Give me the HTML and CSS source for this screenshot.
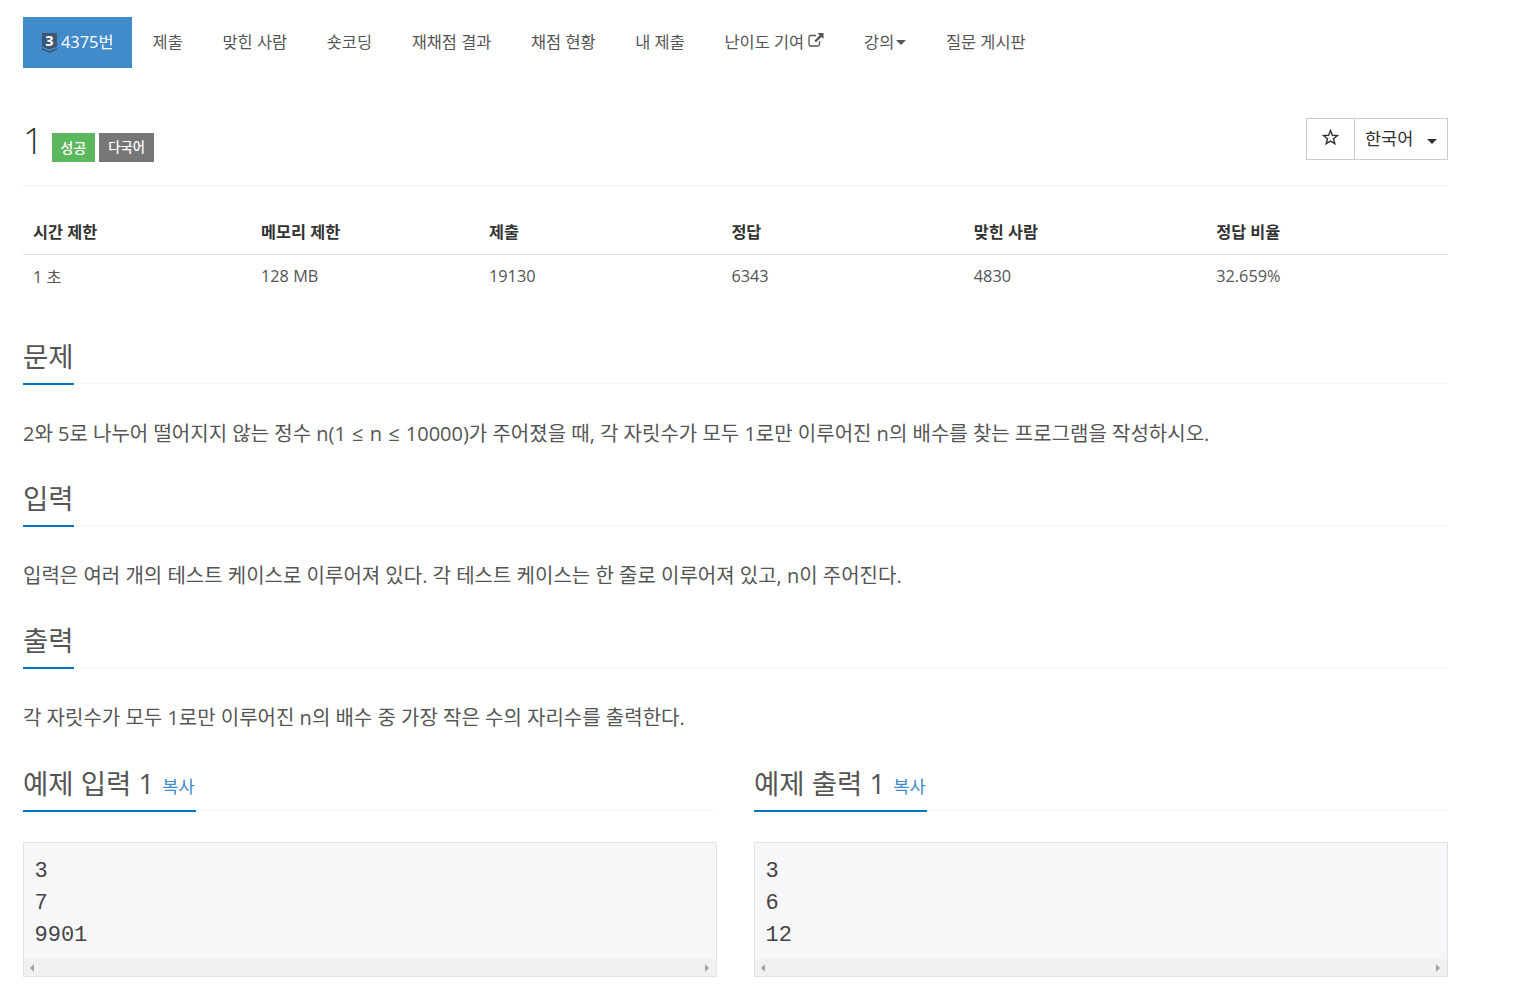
FILE: index.html
```html
<!DOCTYPE html>
<html lang="ko">
<head>
<meta charset="utf-8">
<title>1</title>
<link rel="stylesheet" href="styles.css">
</head>
<body>
<div class="container">
  <nav class="tabs">
    <a class="tab active"><svg class="tier" viewBox="0 0 15 20" width="15" height="20"><path d="M0 0H15V13.5L7.5 16.6 0 13.5Z" fill="#3f5670"/><path d="M0 15.2L7.5 18.2 15 15.2V16.8L7.5 20 0 16.8Z" fill="#3f5670"/><text x="7.5" y="13" text-anchor="middle" class="tier-num">3</text></svg><span>4375번</span></a>
    <a class="tab">제출</a>
    <a class="tab">맞힌 사람</a>
    <a class="tab">숏코딩</a>
    <a class="tab">재채점 결과</a>
    <a class="tab">채점 현황</a>
    <a class="tab">내 제출</a>
    <a class="tab">난이도 기여 <svg class="ext" viewBox="0 0 16 14" width="16" height="14"><path d="M11.5 8.2V11.3A1.7 1.7 0 0 1 9.8 13H2.7A1.7 1.7 0 0 1 1 11.3V4.2A1.7 1.7 0 0 1 2.7 2.5H8" fill="none" stroke="#555" stroke-width="1.3"/><path d="M9.5 0H15.5V6L13.4 3.9 8 9.3 6.4 7.7 11.7 2.3Z" fill="#555"/></svg></a>
    <a class="tab">강의<i class="caret"></i></a>
    <a class="tab">질문 게시판</a>
  </nav>

  <header class="title-row">
    <div class="title-left">
      <h1 class="title">1</h1>
      <span class="label green">성공</span>
      <span class="label gray">다국어</span>
    </div>
    <div class="btn-group">
      <button class="btn star"><svg viewBox="0 0 18 17" width="17" height="16"><path d="M9 1.6L11 6.6 16.4 7 12.2 10.4 13.6 15.6 9 12.8 4.4 15.6 5.8 10.4 1.6 7 7 6.6Z" fill="none" stroke="#333" stroke-width="1.5"/></svg></button>
      <button class="btn lang">한국어<i class="caret dark"></i></button>
    </div>
  </header>

  <table class="info">
    <thead>
      <tr><th class="c1">시간 제한</th><th class="c1">메모리 제한</th><th class="c2">제출</th><th class="c2">정답</th><th class="c2">맞힌 사람</th><th>정답 비율</th></tr>
    </thead>
    <tbody>
      <tr><td>1 초</td><td>128 MB</td><td>19130</td><td>6343</td><td>4830</td><td>32.659%</td></tr>
    </tbody>
  </table>

  <section class="sec first">
    <div class="head"><h2>문제</h2></div>
    <p>2와 5로 나누어 떨어지지 않는 정수 n(1 <span class="le">≤</span> n <span class="le">≤</span> 10000)가 주어졌을 때, 각 자릿수가 모두 1로만 이루어진 n의 배수를 찾는 프로그램을 작성하시오.</p>
  </section>
  <section class="sec">
    <div class="head"><h2>입력</h2></div>
    <p>입력은 여러 개의 테스트 케이스로 이루어져 있다. 각 테스트 케이스는 한 줄로 이루어져 있고, n이 주어진다.</p>
  </section>
  <section class="sec">
    <div class="head"><h2>출력</h2></div>
    <p>각 자릿수가 모두 1로만 이루어진 n의 배수 중 가장 작은 수의 자리수를 출력한다.</p>
  </section>

  <div class="samples">
    <section class="sample">
      <div class="head"><h2>예제 입력 1 <a class="copy">복사</a></h2></div>
      <div class="box">
        <pre>3
7
9901</pre>
        <div class="hbar"><i class="arr left"></i><i class="arr right"></i></div>
      </div>
    </section>
    <section class="sample">
      <div class="head"><h2>예제 출력 1 <a class="copy">복사</a></h2></div>
      <div class="box">
        <pre>3
6
12</pre>
        <div class="hbar"><i class="arr left"></i><i class="arr right"></i></div>
      </div>
    </section>
  </div>
</div>
</body>
</html>
```

FILE: styles.css
```css
* { box-sizing: border-box; }
html, body { margin: 0; padding: 0; background: #fff; }
body {
  font-family: "Open Sans", "Noto Sans CJK KR", sans-serif;
  font-size: 14px;
  color: #333;
  height: 1005px;
  overflow: hidden;
}
.container { width: 1425px; margin-left: 23px; }

.tabs { display: flex; margin-top: 17px; height: 51px; }
.tab {
  display: flex; align-items: center; height: 48px; padding: 0 19.85px;
  font-size: 16.4px; color: #555; white-space: pre;
}
.tab.active { background: #428bca; color: #fff; padding: 0 18px 0 19px; height: 51px; margin-right: 1.2px; }
.tab.active span { margin-top: -3px; }
.tier { margin-right: 4px; margin-top: 1px; overflow: visible; }
.tier-num { font: bold 14.5px "Open Sans", sans-serif; fill: #fff; }
.ext { margin-top: -2px; }
.caret {
  display: inline-block; width: 0; height: 0; margin-left: 2px;
  border-top: 5px solid #555; border-left: 5px solid transparent; border-right: 5px solid transparent;
  margin-top: 2px;
}
.caret.dark { border-top-color: #333; margin-left: 14px; margin-top: 7px; }

.title-row {
  display: flex; justify-content: space-between; align-items: flex-start;
  margin-top: 50px; height: 68px; border-bottom: 1px solid #eee;
}
.title-left { display: flex; align-items: flex-start; }
.title { margin: 0; font-size: 36px; font-weight: 300; line-height: 46px; color: #333; height: 46px; }
.label {
  display: block; height: 29px; margin-top: 15px; padding: 0 9px; line-height: 29px;
  font-size: 14px; font-weight: 500; color: #fff;
}
.label.green { background: #5cb85c; margin-left: 8px; }
.label.gray { background: #777; margin-left: 4px; font-size: 13.3px; }

.btn-group { display: flex; height: 42px; border: 1px solid #ccc; }
.btn {
  background: #fff; border: 0; padding: 0; margin: 0; font-family: inherit;
  font-size: 17.5px; color: #333; display: flex; align-items: center;
}
.btn.star { width: 48px; justify-content: center; border-right: 1px solid #ccc; }
.btn.star svg { margin-top: -5px; }
.btn.lang { width: 92px; padding: 0 0 3px 10px; }

.info { width: 100%; border-collapse: collapse; margin-top: 22px; table-layout: fixed; }
.info th, .info td { padding: 0 10px; text-align: left; }
.info th { height: 46px; font-weight: 700; border-bottom: 1px solid #ddd; color: #333; font-size: 16.3px; }
.info td { height: 44px; color: #555; font-size: 16.3px; }
.c1 { width: 228px; }
.c2 { width: 242.4px; }

.sec { height: 142px; }
.sec.first { margin-top: 43px; }
.head { border-bottom: 1px dotted #eee; height: 43px; }
.head h2 {
  display: inline-block; margin: 0; height: 44px; font-size: 27.5px; line-height: 32px;
  font-weight: 400; color: #555; border-bottom: 2px solid #0076c0; white-space: pre;
}
.sec p { margin: 35px 0 0; font-size: 20px; line-height: 30px; color: #555; white-space: nowrap; }
.le { margin: 0 1px; }

.samples { display: grid; grid-template-columns: 694px 694px; column-gap: 37px; margin-top: 0; }
.sample .head { height: 44px; }
.sample .head h2 { height: 45px; line-height: 34px; padding-right: 1px; }
.copy { font-size: 17.6px; color: #428bca; margin-left: 1px; vertical-align: 1px; }
.box { margin-top: 31px; height: 135px; border: 1px solid #e1e1e8; background: #f7f7f9; display: flex; flex-direction: column; }
.box pre {
  margin: 0; flex: 1; padding: 13px 10px 0 10.5px; font-family: "Liberation Mono", monospace;
  font-size: 22px; line-height: 32px; color: #444;
}
.hbar { height: 17px; background: #f1f1f1; display: flex; justify-content: space-between; align-items: center; padding: 0 7px 0 6px; }
.arr { width: 0; height: 0; border-top: 4px solid transparent; border-bottom: 4px solid transparent; }
.arr.left { border-right: 4px solid #a3a3a3; }
.arr.right { border-left: 4px solid #a3a3a3; }
```
